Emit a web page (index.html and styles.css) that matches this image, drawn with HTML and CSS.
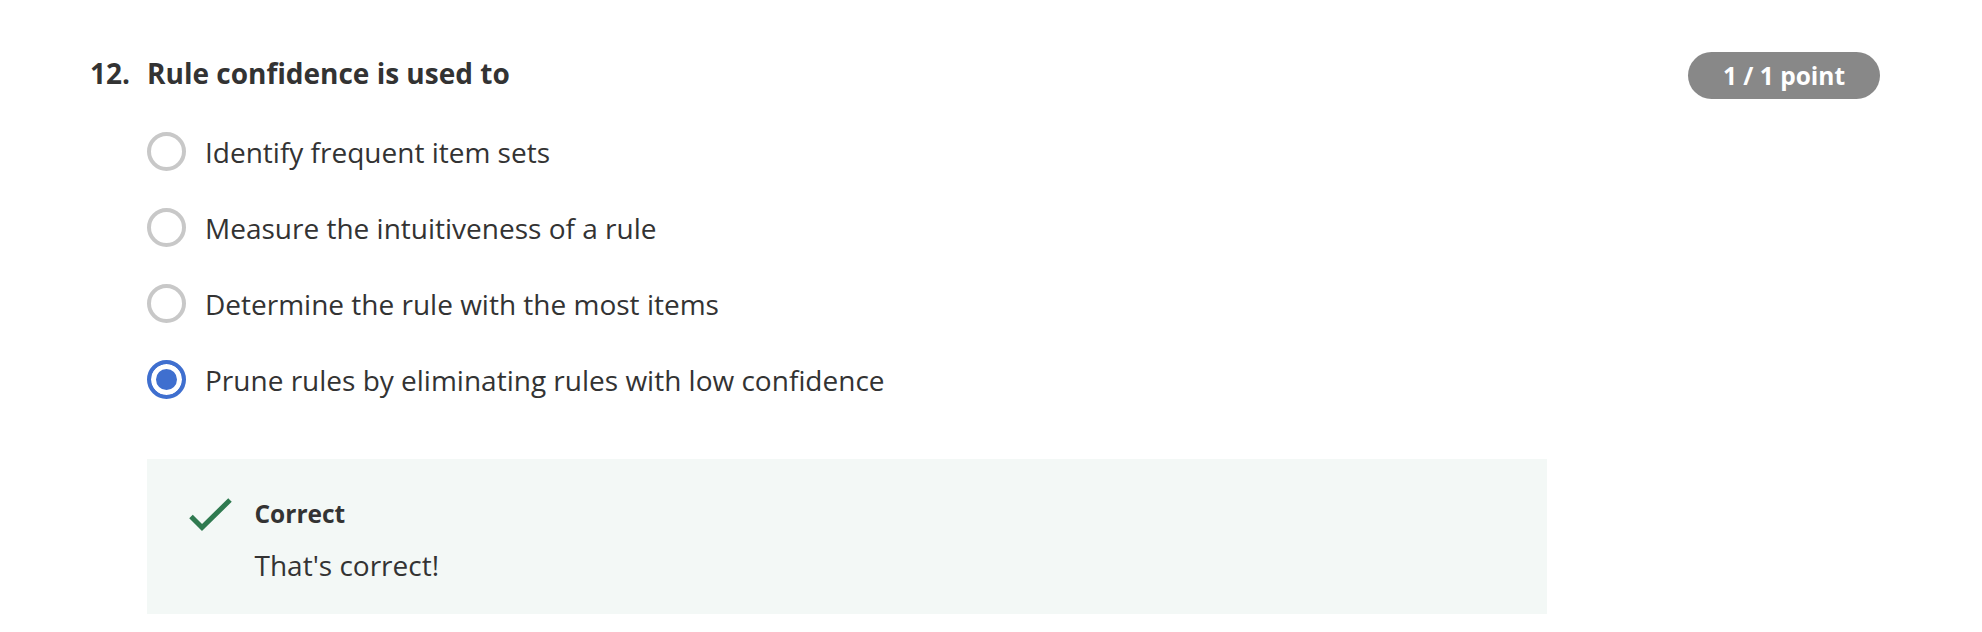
FILE: index.html
```html
<!DOCTYPE html>
<html lang="en">
<head>
<meta charset="utf-8">
<title>Question 12</title>
<link rel="stylesheet" href="styles.css">
</head>
<body>
<div class="page">
  <div class="question">
    <div class="q-head">
      <div class="q-num">12.</div>
      <div class="q-title">Rule confidence is used to</div>
      <div class="badge">1 / 1 point</div>
    </div>
    <div class="q-body">
      <ul class="options">
        <li class="option"><span class="radio"></span><span class="opt-text">Identify frequent item sets</span></li>
        <li class="option"><span class="radio"></span><span class="opt-text">Measure the intuitiveness of a rule</span></li>
        <li class="option"><span class="radio"></span><span class="opt-text">Determine the rule with the most items</span></li>
        <li class="option"><span class="radio checked"></span><span class="opt-text">Prune rules by eliminating rules with low confidence</span></li>
      </ul>
      <div class="feedback">
        <svg class="check" width="44" height="34" viewBox="0 0 44 34" aria-hidden="true">
          <polyline points="3,18.5 14,29.5 42,2" fill="none" stroke="#2f7a50" stroke-width="5" stroke-linejoin="miter" stroke-linecap="butt"/>
        </svg>
        <div class="fb-text">
          <div class="fb-title">Correct</div>
          <div class="fb-msg">That's correct!</div>
        </div>
      </div>
    </div>
  </div>
</div>
</body>
</html>
```
FILE: styles.css
```css
html, body {
  margin: 0;
  padding: 0;
  background: #ffffff;
}
body {
  font-family: "Open Sans", "Noto Sans", "Liberation Sans", sans-serif;
  color: #333333;
}
.page {
  padding: 54px 102px 0 90px;
}
.q-head {
  display: flex;
  align-items: flex-start;
  height: 38px;
  font-size: 28px;
  font-weight: 700;
  line-height: 38px;
  color: #333333;
}
.q-num {
  width: 57px;
  flex: none;
}
.q-title {
  flex: 1;
}
.badge {
  flex: none;
  margin-top: -2px;
  width: 192px;
  height: 47px;
  border-radius: 24px;
  background: #888888;
  color: #ffffff;
  font-size: 24.5px;
  font-weight: 700;
  line-height: 47px;
  text-align: center;
}
.q-body {
  margin-left: 57px;
}
.options {
  list-style: none;
  margin: 21.8px 0 0 0;
  padding: 0;
}
.option {
  display: flex;
  align-items: center;
  height: 76px;
  font-size: 28px;
  line-height: 38px;
  color: #333333;
}
.radio {
  flex: none;
  box-sizing: border-box;
  width: 39px;
  height: 39px;
  border: 4px solid #c8c8c8;
  border-radius: 50%;
  margin-right: 19px;
  background: #ffffff;
}
.radio.checked {
  border: 4px solid #3f6fcf;
  background: #3f6fcf;
  box-shadow: inset 0 0 0 5px #ffffff;
}
.feedback {
  display: flex;
  align-items: flex-start;
  width: 1400px;
  box-sizing: border-box;
  margin-top: 41.5px;
  padding: 38px 0 30px 41px;
  background: #f3f8f6;
}
.check {
  flex: none;
  margin-top: 1px;
  margin-right: 22.5px;
}
.fb-title {
  font-size: 24.5px;
  font-weight: 700;
  line-height: 34px;
  color: #333333;
}
.fb-msg {
  margin-top: 15px;
  font-size: 28px;
  line-height: 38px;
  color: #333333;
}
```
